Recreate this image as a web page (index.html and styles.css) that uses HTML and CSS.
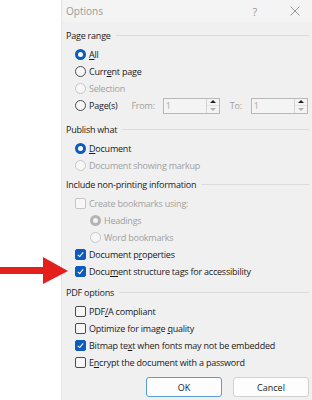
FILE: index.html
```html
<!DOCTYPE html>
<html lang="en">
<head>
  <meta charset="UTF-8" />
  <title>Options</title>
  <link rel="stylesheet" href="styles.css">
</head>
<body>
  <div class="page">
    <svg class="arrow" width="70" height="28" viewBox="0 0 70 28">
      <polygon points="0,10 43,10 43,0 68,14 43,27 43,17 0,17" fill="#e3201b" />
    </svg>

    <div class="dialog">
      <div class="titlebar">
        <span class="title">Options</span>
        <span class="help">?</span>
        <svg class="close" width="10" height="10" viewBox="0 0 10 10">
          <path d="M0.5 0.5 L9.5 9.5 M9.5 0.5 L0.5 9.5" stroke="#9a9a9a" stroke-width="1" fill="none" />
        </svg>
      </div>

      <div class="content">
        <div class="group-title first">Page range</div>
        <div class="options">
          <div class="row"><span class="radio on"></span><span><u>A</u>ll</span></div>
          <div class="row"><span class="radio"></span><span>Curr<u>e</u>nt page</span></div>
          <div class="row disabled"><span class="radio"></span><span>Selection</span></div>
          <div class="row">
            <span class="radio"></span><span>Pa<u>g</u>e(s)</span>
            <span class="field-label">From:</span>
            <span class="spin"><span class="spin-value">1</span><span class="spin-btns"><span class="up"></span><span class="down"></span></span></span>
            <span class="field-label to">To:</span>
            <span class="spin"><span class="spin-value">1</span><span class="spin-btns"><span class="up"></span><span class="down"></span></span></span>
          </div>
        </div>

        <div class="group-title publish">Publish what</div>
        <div class="options">
          <div class="row"><span class="radio on"></span><span><u>D</u>ocument</span></div>
          <div class="row disabled"><span class="radio"></span><span>Document showing markup</span></div>
        </div>

        <div class="group-title">Include non-printing information</div>
        <div class="options">
          <div class="row disabled"><span class="check"></span><span>Create bookmarks using:</span></div>
          <div class="row disabled sub"><span class="radio on"></span><span>Headings</span></div>
          <div class="row disabled sub"><span class="radio"></span><span>Word bookmarks</span></div>
          <div class="row"><span class="check on"></span><span>Document p<u>r</u>operties</span></div>
          <div class="row"><span class="check on"></span><span>Docu<u>m</u>ent structure tags for accessibility</span></div>
        </div>

        <div class="group-title pdf">PDF options</div>
        <div class="options">
          <div class="row"><span class="check"></span><span>PDF<u>/</u>A compliant</span></div>
          <div class="row"><span class="check"></span><span>Optimize for image <u>q</u>uality</span></div>
          <div class="row"><span class="check on"></span><span>Bitmap te<u>x</u>t when fonts may not be embedded</span></div>
          <div class="row"><span class="check"></span><span>E<u>n</u>crypt the document with a password</span></div>
        </div>

        <div class="buttons">
          <button class="btn default">OK</button>
          <button class="btn">Cancel</button>
        </div>
      </div>
    </div>
  </div>
</body>
</html>
```

FILE: styles.css
```css
body {
  margin: 0;
  background: #ffffff;
  font-family: "Open Sans", "Noto Sans", sans-serif;
  font-size: 9px;
  letter-spacing: -0.22px;
  color: #1a1a1a;
}

.page {
  position: relative;
  width: 312px;
  height: 400px;
  overflow: hidden;
}

.arrow {
  position: absolute;
  left: 0;
  top: 257px;
  z-index: 2;
}

.dialog {
  margin-left: 61px;
  height: 400px;
  background: #f0f0f0;
  border-left: 1px solid #e4e4e4;
}

.titlebar {
  height: 22px;
  display: flex;
  align-items: center;
  padding-left: 4px;
  background: #f4f4f4;
  color: #9a9a9a;
}

.title {
  font-size: 10px;
  letter-spacing: 0;
  flex: 1;
}

.help {
  font-size: 11px;
  margin-right: 33px;
}

.close {
  margin-right: 12px;
}

.content {
  padding: 0 3px 0 4px;
}

.group-title {
  display: flex;
  align-items: center;
  height: 17px;
  margin-top: 2px;
  white-space: nowrap;
}

.group-title::after {
  content: "";
  flex: 1;
  height: 1px;
  margin-left: 5px;
  background: #dcdcdc;
}

.group-title.first {
  margin-top: 5px;
}

.group-title.publish {
  margin-top: 7px;
}

.group-title.pdf {
  margin-top: 4px;
}

.options {
  padding-top: 2px;
  padding-left: 9px;
}

.row {
  display: flex;
  align-items: center;
  height: 17px;
  white-space: nowrap;
}

.row.sub {
  padding-left: 15px;
}

.row.disabled {
  color: #a0a0a0;
}

u {
  text-decoration-thickness: 1px;
  text-underline-offset: 1px;
}

.radio {
  width: 11px;
  height: 11px;
  box-sizing: border-box;
  border: 1px solid #4a4a4a;
  border-radius: 50%;
  background: #f7f7f7;
  margin-right: 3px;
  flex: none;
}

.radio.on {
  border: 3px solid #0b5cbd;
  background: #ffffff;
}

.disabled .radio {
  border-color: #c6c6c6;
}

.disabled .radio.on {
  border: 3px solid #b4b4b4;
  background: #f4f4f4;
}

.check {
  width: 11px;
  height: 11px;
  box-sizing: border-box;
  border: 1px solid #4a4a4a;
  border-radius: 2px;
  background: #f7f7f7;
  margin-right: 3px;
  flex: none;
  position: relative;
}

.check.on {
  background: #0b5cbd;
  border-color: #0b5cbd;
}

.check.on::after {
  content: "";
  position: absolute;
  left: 3px;
  top: 1px;
  width: 2px;
  height: 5px;
  border: solid #ffffff;
  border-width: 0 1px 1px 0;
  transform: rotate(40deg);
}

.disabled .check {
  border-color: #c6c6c6;
}

.field-label {
  color: #a0a0a0;
  margin-left: 14px;
  margin-right: 8px;
}

.field-label.to {
  margin-left: 10px;
  margin-right: 9px;
}

.spin {
  display: flex;
  width: 57px;
  height: 16px;
  box-sizing: border-box;
  border: 1px solid #b8b8b8;
  background: #f4f4f4;
}

.spin-value {
  flex: 1;
  padding-left: 2px;
  color: #a8a8a8;
  line-height: 14px;
}

.spin-btns {
  width: 12px;
  display: flex;
  flex-direction: column;
  border-left: 1px solid #d4d4d4;
}

.spin-btns span {
  flex: 1;
  display: flex;
  align-items: center;
  justify-content: center;
}

.spin-btns .up {
  border-bottom: 1px solid #e0e0e0;
}

.spin-btns .up::after {
  content: "";
  border: 3px solid transparent;
  border-top: 0;
  border-bottom: 3px solid #222222;
}

.spin-btns .down::after {
  content: "";
  border: 3px solid transparent;
  border-bottom: 0;
  border-top: 3px solid #b0b0b0;
}

.buttons {
  display: flex;
  justify-content: flex-end;
  gap: 11px;
  margin-top: 6px;
}

.btn {
  width: 76px;
  height: 20px;
  box-sizing: border-box;
  background: #fdfdfd;
  border: 1px solid #d2d2d2;
  border-radius: 3px;
  font-family: inherit;
  font-size: 9px;
  color: #1a1a1a;
  padding: 0;
}

.btn.default {
  border-color: #5b9ad8;
}
```
